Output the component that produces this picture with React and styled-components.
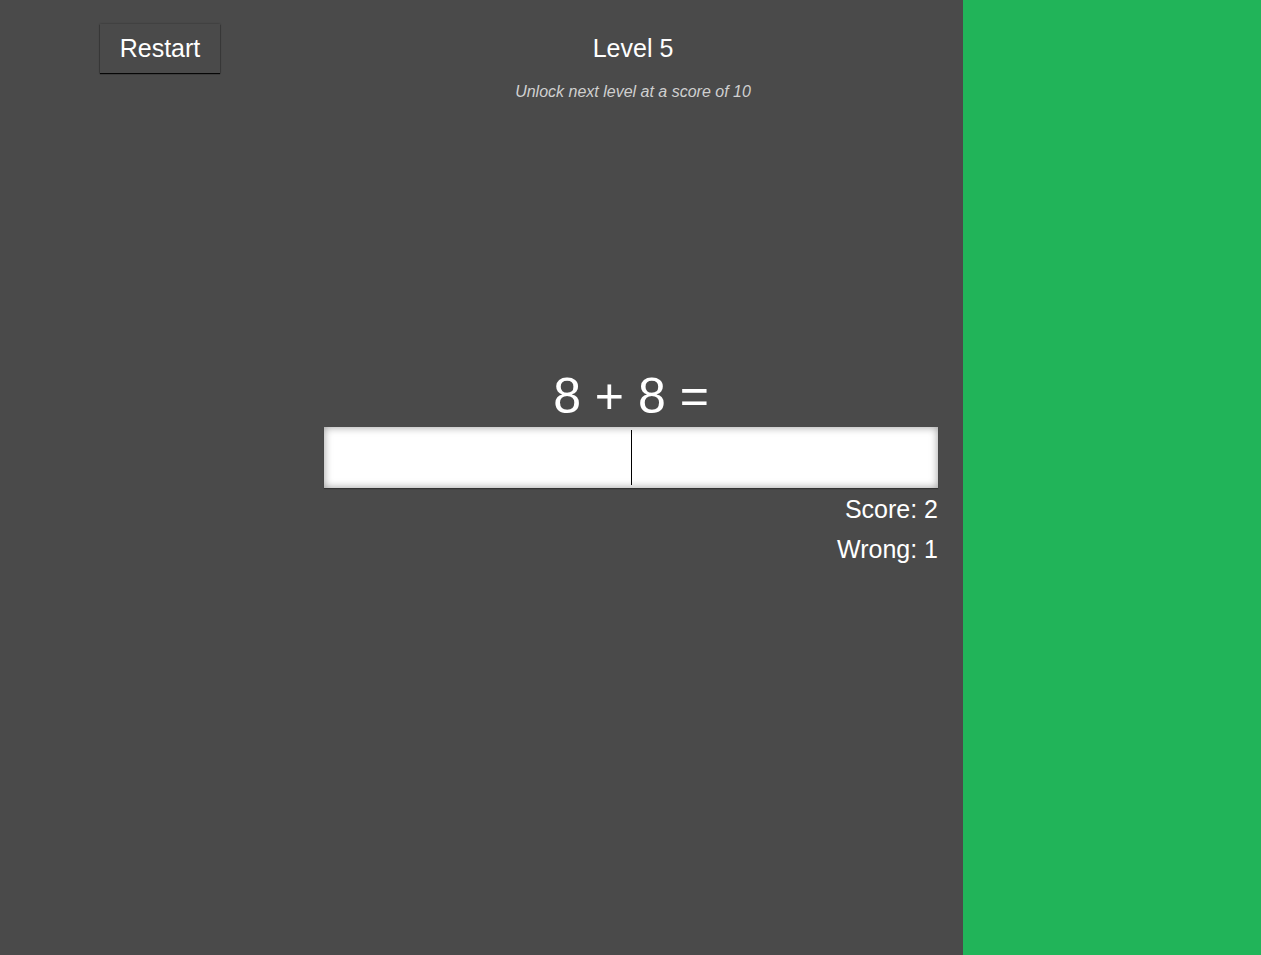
import React from 'react';
import styled, { createGlobalStyle } from 'styled-components';

const Global = createGlobalStyle`
    html, body {
        margin: 0;
        padding: 0;
        height: 100%;
    }
    body {
        font-family: "Liberation Sans", Arial, sans-serif;
        background: #4a4a4a;
        color: #fff;
    }
    #root {
        height: 100%;
    }
`

const Page = styled.div`
    display: flex;
    height: 955px;
    overflow: hidden;
`

const Main = styled.main`
    width: 963px;
    background: #4a4a4a;
    display: grid;
    grid-template-columns: 324px 614px;
    grid-template-rows: 49px auto;
    align-content: start;
    padding-top: 24px;
    box-sizing: border-box;
`

const Side = styled.aside`
    flex: 1;
    background: #21b459;
`

const RestartButton = styled.button`
    justify-self: start;
    margin-left: 100px;
    height: 49px;
    width: 120px;
    padding: 0;
    background: #4a4a4a;
    color: #fff;
    border: none;
    font-family: inherit;
    font-size: 25px;
    cursor: pointer;
    box-shadow: 0 1px 1px rgba(0, 0, 0, 0.9), 0 0 2px rgba(0, 0, 0, 0.35);
    outline: none;
`

const Header = styled.header`
    display: flex;
    flex-direction: column;
    align-items: center;
    padding-left: 4px;
`

const Title = styled.h1`
    margin: 10px 0 0;
    font-size: 25px;
    font-weight: normal;
    line-height: 28px;
`

const Hint = styled.p`
    margin: 21px 0 0;
    font-size: 16px;
    font-style: italic;
    line-height: 18px;
    color: #d0d0d0;
`

const Game = styled.section`
    grid-column: 2;
    display: flex;
    flex-direction: column;
    margin-top: 295px;
`

const Equation = styled.div`
    font-size: 50px;
    line-height: 56px;
    text-align: center;
`

const Field = styled.div`
    position: relative;
    margin-top: 3px;
`

const Answer = styled.input`
    display: block;
    height: 61px;
    width: 100%;
    box-sizing: border-box;
    border: none;
    background: #fff;
    box-shadow: inset 0 0 9px rgba(0, 0, 0, 0.4), 0 1px 1px rgba(0, 0, 0, 0.3);
    font-family: inherit;
    font-size: 32px;
    text-align: center;
    caret-color: transparent;
    outline: none;
`

const Caret = styled.span`
    position: absolute;
    left: 307px;
    top: 3px;
    bottom: 3px;
    width: 1px;
    background: #000;
    pointer-events: none;
`

const Stats = styled.div`
    padding-top: 1px;
`

const Stat = styled.div`
    text-align: right;
    font-size: 25px;
    line-height: 40px;
`

export default function App() {
    return (
        <Page>
            <Global />
            <Main>
                <RestartButton>Restart</RestartButton>
                <Header>
                    <Title>Level 5</Title>
                    <Hint>Unlock next level at a score of 10</Hint>
                </Header>
                <Game>
                    <Equation>8 + 8 =</Equation>
                    <Field>
                        <Answer type="text" autoFocus />
                        <Caret />
                    </Field>
                    <Stats>
                        <Stat>Score: 2</Stat>
                        <Stat>Wrong: 1</Stat>
                    </Stats>
                </Game>
            </Main>
            <Side />
        </Page>
    )
}
